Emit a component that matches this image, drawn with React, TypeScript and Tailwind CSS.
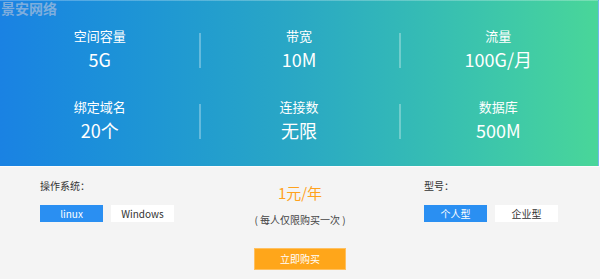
import React, { useState } from 'react';

const stats = [
  [
    { label: '空间容量', value: '5G' },
    { label: '带宽', value: '10M' },
    { label: '流量', value: '100G/月' },
  ],
  [
    { label: '绑定域名', value: '20个' },
    { label: '连接数', value: '无限' },
    { label: '数据库', value: '500M' },
  ],
];

const font = { fontFamily: '"Noto Sans CJK SC", "Noto Sans", sans-serif' };

const Toggle: React.FC<{ options: string[]; value: string; onChange: (v: string) => void }> = ({ options, value, onChange }) => (
  <div className="flex gap-[8px] mt-[13px]">
    {options.map((o) => (
      <button
        key={o}
        onClick={() => onChange(o)}
        className={`w-[63px] h-[17px] text-[10px] leading-[17px] ${value === o ? 'bg-[#2a8ff2] text-white' : 'bg-white text-[#333]'}`}
      >
        {o}
      </button>
    ))}
  </div>
);

const App: React.FC = () => {
  const [os, setOs] = useState('linux');
  const [model, setModel] = useState('个人型');

  return (
    <div className="relative w-[600px] h-[279px] bg-white" style={font}>
      <div className="absolute left-[1px] top-[1px] text-[14px] font-bold leading-[15px] text-[#9bb9dc]/80">景安网络</div>

      <div className="w-[599px] h-[166px] bg-gradient-to-r from-[#1a82e3] via-[#2aa8c4] to-[#49d699] border-t border-t-white/25 border-r border-r-white/40 flex flex-col pt-[25px] gap-[27px]">
        {stats.map((row, i) => (
          <div key={i} className="flex">
            {row.map((s, j) => (
              <div key={s.label} className="relative w-[200px] flex flex-col items-center text-white">
                {j > 0 && <div className="absolute left-0 top-[7px] h-[35px] w-[2px] bg-white/30" />}
                <div className="text-[13px] leading-[20px]">{s.label}</div>
                <div className="text-[18px] leading-[22px] mt-[2px]">{s.value}</div>
              </div>
            ))}
          </div>
        ))}
      </div>

      <div className="w-[600px] h-[113px] bg-[#f4f4f4] border-t border-t-white/70 grid grid-cols-3">
        <div className="pl-[40px] pt-[13px]">
          <div className="text-[10px] leading-[12px] text-[#333]">操作系统：</div>
          <Toggle options={['linux', 'Windows']} value={os} onChange={setOs} />
        </div>
        <div className="flex flex-col items-center pt-[16px]">
          <div className="text-[15px] leading-[20px] text-[#ffa21d]">1元/年</div>
          <div className="text-[10px] leading-[12px] text-[#444] mt-[11px]">( 每人仅限购买一次 )</div>
          <button className="mt-[22px] w-[92px] h-[22px] bg-[#ffa61a] border border-[#ffc060] text-white text-[10px] leading-[20px]">立即购买</button>
        </div>
        <div className="pl-[24px] pt-[13px]">
          <div className="text-[10px] leading-[12px] text-[#333]">型号：</div>
          <Toggle options={['个人型', '企业型']} value={model} onChange={setModel} />
        </div>
      </div>
    </div>
  );
};

export default App;
